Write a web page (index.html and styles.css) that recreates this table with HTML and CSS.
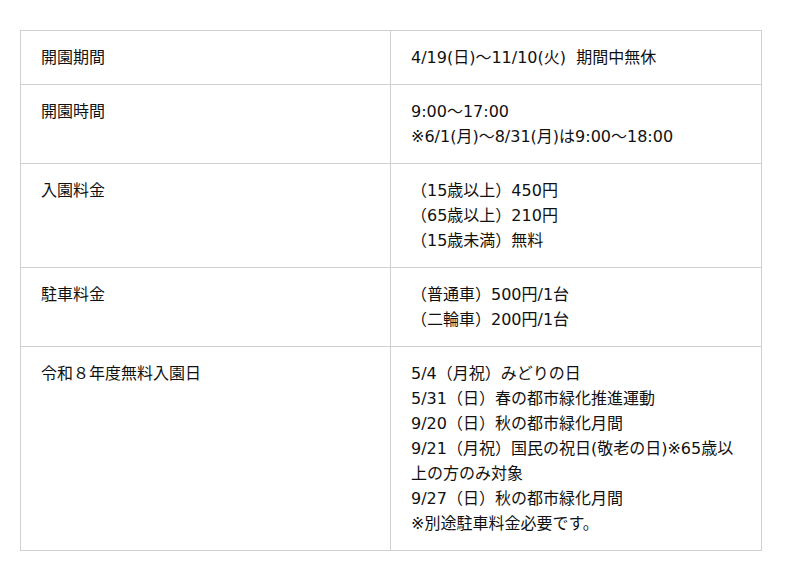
FILE: index.html
```html
<!DOCTYPE html>
<html lang="ja">
<head>
<meta charset="utf-8">
<link rel="stylesheet" href="styles.css">
</head>
<body>
<table class="info">
<tr><th>開園期間</th><td>4/19(日)～11/10(火)&nbsp;&nbsp;期間中無休</td></tr>
<tr><th>開園時間</th><td>9:00～17:00<br>※6/1(月)～8/31(月)は9:00～18:00</td></tr>
<tr><th>入園料金</th><td>（15歳以上）450円<br>（65歳以上）210円<br>（15歳未満）無料</td></tr>
<tr><th>駐車料金</th><td>（普通車）500円/1台<br>（二輪車）200円/1台</td></tr>
<tr><th>令和８年度無料入園日</th><td>5/4（月祝）みどりの日<br>5/31（日）春の都市緑化推進運動<br>9/20（日）秋の都市緑化月間<br>9/21（月祝）国民の祝日(敬老の日)※65歳以上の方のみ対象<br>9/27（日）秋の都市緑化月間<br>※別途駐車料金必要です。</td></tr>
</table>
</body>
</html>
```
FILE: styles.css
```css
html, body { margin: 0; padding: 0; background: #fff; }
body { padding: 30px 0 0 20px; }
.info {
  border-collapse: collapse;
  width: 742px;
  table-layout: fixed;
  font-family: "DejaVu Sans", "Noto Sans CJK JP", sans-serif;
  font-size: 16px;
  line-height: 25px;
  color: #111;
}
.info th, .info td {
  border: 1px solid #d0d0d0;
  padding: 14px 20px 14px 20px;
  text-align: left;
  vertical-align: top;
  font-weight: normal;
}
.info th { width: 329px; }
```
